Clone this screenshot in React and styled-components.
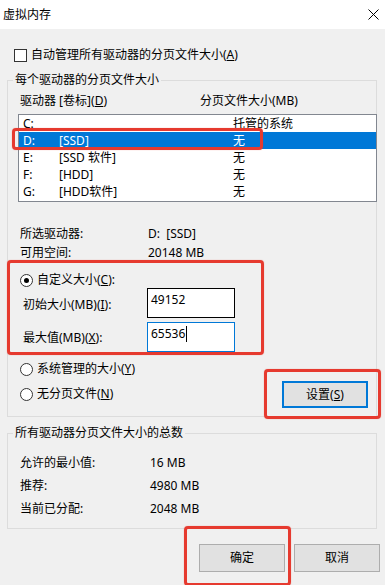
import React from "react";
import styled, { createGlobalStyle } from "styled-components";

const Global = createGlobalStyle`
  html, body { margin: 0; padding: 0; background: #f0f0f0; }
  * { box-sizing: border-box; }
`;

const FONT = `"Segoe UI", "Noto Sans", "Noto Sans CJK SC", sans-serif`;

const Window = styled.div`
  position: relative;
  width: 385px;
  height: 585px;
  overflow: hidden;
  background: #f0f0f0;
  font-family: ${FONT};
  font-size: 12px;
  line-height: 16px;
  color: #000;
  display: flex;
  flex-direction: column;
`;

const TitleBar = styled.div`
  flex: none;
  height: 29px;
  background: #fff;
  display: flex;
  align-items: center;
  justify-content: space-between;
  padding: 0 6px 0 3px;
`;

const Title = styled.span`
  font-size: 12px;
`;

const Body = styled.div`
  display: flex;
  flex-direction: column;
  padding: 18px 8px 0 7px;
`;

const CheckRow = styled.div`
  display: flex;
  align-items: center;
  gap: 4px;
  height: 16px;
  margin-left: 7px;
`;

const CheckBox = styled.span`
  flex: none;
  width: 13px;
  height: 13px;
  border: 1px solid #333;
  background: #fff;
`;

const Group = styled.fieldset`
  margin: ${(p) => p.$mt}px 0 0;
  padding: 0;
  min-width: 0;
  border: 1px solid #dcdcdc;
`;

const Legend = styled.legend`
  margin-left: 5px;
  padding: 0 2px;
  line-height: 16px;
`;

const GroupBody = styled.div`
  padding: ${(p) => p.$pad};
`;

const HeaderRow = styled.div`
  display: grid;
  grid-template-columns: 180px 1fr;
  padding-left: 2px;
  height: 16px;
`;

const ListBox = styled.div`
  margin-top: 5px;
  margin-right: -1px;
  border: 1px solid #828790;
  background: #fff;
  padding-bottom: 1px;
`;

const ListRow = styled.div`
  display: grid;
  grid-template-columns: 36px 174px 1fr;
  height: 17px;
  line-height: 17px;
  padding-left: 4px;
  white-space: nowrap;
  background: ${(p) => (p.$selected ? "#0078d7" : "transparent")};
  color: ${(p) => (p.$selected ? "#fff" : "#000")};
`;

const InfoGrid = styled.div`
  display: grid;
  grid-template-columns: ${(p) => p.$col}px auto;
  grid-auto-rows: ${(p) => p.$row}px;
  row-gap: ${(p) => p.$gap}px;
  align-items: center;
  margin-top: ${(p) => p.$mt}px;
  padding-left: 2px;
  white-space: nowrap;
`;

const CustomSection = styled.div`
  margin-top: 10px;
  display: flex;
  flex-direction: column;
  gap: 0;
`;

const RadioRow = styled.div`
  display: flex;
  align-items: center;
  gap: 4px;
  height: 16px;
  padding-left: 2px;
`;

const Radio = styled.span`
  flex: none;
  width: 13px;
  height: 13px;
  border-radius: 50%;
  border: 1px solid #333;
  background: #fff;
  display: flex;
  align-items: center;
  justify-content: center;
  &::after {
    content: "";
    width: 5px;
    height: 5px;
    border-radius: 50%;
    background: ${(p) => (p.$checked ? "#000" : "transparent")};
  }
`;

const FieldRows = styled.div`
  display: flex;
  flex-direction: column;
  gap: 4px;
`;

const FieldRow = styled.div`
  display: grid;
  grid-template-columns: 124px 88px;
  align-items: start;
  padding-left: 5px;
`;

const FieldLabel = styled.span`
  padding-top: ${(p) => p.$pt}px;
  white-space: nowrap;
`;

const TextBox = styled.div`
  width: 88px;
  height: 30px;
  border: 1px solid ${(p) => (p.$focused ? "#0078d7" : "#000")};
  background: #fff;
  padding: 3px 3px;
  line-height: 16px;
  display: flex;
  align-items: flex-start;
`;

const Caret = styled.span`
  display: inline-block;
  width: 1px;
  height: 16px;
  background: #000;
  margin-left: 1px;
`;

const BottomRow = styled.div`
  margin-top: 9px;
  display: flex;
  justify-content: space-between;
  align-items: flex-start;
`;

const RadioColumn = styled.div`
  display: flex;
  flex-direction: column;
  gap: 9px;
`;

const Button = styled.button`
  width: 86px;
  height: ${(p) => (p.$default ? 27 : 28)}px;
  margin: 0;
  padding: 0;
  font: inherit;
  color: #000;
  background: #e1e1e1;
  border: ${(p) => (p.$default ? "2px solid #0078d7" : "1px solid #adadad")};
  display: flex;
  align-items: center;
  justify-content: center;
`;

const SetButton = styled(Button)`
  margin-top: 20px;
  margin-right: 8px;
`;

const ButtonBar = styled.div`
  margin-top: 15px;
  margin-right: -3px;
  display: flex;
  justify-content: flex-end;
  gap: 9px;
`;

const Annotation = styled.div`
  position: absolute;
  left: ${(p) => p.$x}px;
  top: ${(p) => p.$y}px;
  width: ${(p) => p.$w}px;
  height: ${(p) => p.$h}px;
  border: 3px solid #e63a2f;
  border-radius: 4px;
  box-shadow: 0 0 1px rgba(230, 58, 47, 0.6);
  pointer-events: none;
`;

const CloseIcon = () => (
  <svg width="11" height="11" viewBox="0 0 11 11">
    <path d="M0.5 0.5 L10.5 10.5 M10.5 0.5 L0.5 10.5" stroke="#000" strokeWidth="1" fill="none" />
  </svg>
);

const drives = [
  { d: "C:", label: "", size: "托管的系统" },
  { d: "D:", label: "[SSD]", size: "无", selected: true },
  { d: "E:", label: "[SSD 软件]", size: "无" },
  { d: "F:", label: "[HDD]", size: "无" },
  { d: "G:", label: "[HDD软件]", size: "无" },
];

export default function App() {
  return (
    <Window>
      <Global />
      <TitleBar>
        <Title>虚拟内存</Title>
        <CloseIcon />
      </TitleBar>
      <Body>
        <CheckRow>
          <CheckBox />
          <span>
            自动管理所有驱动器的分页文件大小(<u>A</u>)
          </span>
        </CheckRow>

        <Group $mt={9}>
          <Legend>每个驱动器的分页文件大小</Legend>
          <GroupBody $pad="5px 0 8px 10px">
            <HeaderRow>
              <span>
                驱动器 [卷标](<u>D</u>)
              </span>
              <span>分页文件大小(MB)</span>
            </HeaderRow>
            <ListBox>
              {drives.map((r) => (
                <ListRow key={r.d} $selected={r.selected}>
                  <span>{r.d}</span>
                  <span>{r.label}</span>
                  <span>{r.size}</span>
                </ListRow>
              ))}
            </ListBox>

            <InfoGrid $col={128} $row={19} $gap={0} $mt={22}>
              <span>所选驱动器:</span>
              <span>D:&nbsp;&nbsp;[SSD]</span>
              <span>可用空间:</span>
              <span>20148 MB</span>
            </InfoGrid>

            <CustomSection>
              <RadioRow>
                <Radio $checked />
                <span>
                  自定义大小(<u>C</u>):
                </span>
              </RadioRow>
              <FieldRows>
                <FieldRow>
                  <FieldLabel $pt={9}>
                    初始大小(MB)(<u>I</u>):
                  </FieldLabel>
                  <TextBox>49152</TextBox>
                </FieldRow>
                <FieldRow>
                  <FieldLabel $pt={8}>
                    最大值(MB)(<u>X</u>):
                  </FieldLabel>
                  <TextBox $focused>
                    65536
                    <Caret />
                  </TextBox>
                </FieldRow>
              </FieldRows>
            </CustomSection>

            <BottomRow>
              <RadioColumn>
                <RadioRow>
                  <Radio />
                  <span>
                    系统管理的大小(<u>Y</u>)
                  </span>
                </RadioRow>
                <RadioRow>
                  <Radio />
                  <span>
                    无分页文件(<u>N</u>)
                  </span>
                </RadioRow>
              </RadioColumn>
              <SetButton $default>
                <span>
                  设置(<u>S</u>)
                </span>
              </SetButton>
            </BottomRow>
          </GroupBody>
        </Group>

        <Group $mt={8}>
          <Legend>所有驱动器分页文件大小的总数</Legend>
          <GroupBody $pad="14px 0 11px 10px">
            <InfoGrid $col={130} $row={16} $gap={7} $mt={0}>
              <span>允许的最小值:</span>
              <span>16 MB</span>
              <span>推荐:</span>
              <span>4980 MB</span>
              <span>当前已分配:</span>
              <span>2048 MB</span>
            </InfoGrid>
          </GroupBody>
        </Group>

        <ButtonBar>
          <Button>确定</Button>
          <Button>取消</Button>
        </ButtonBar>
      </Body>

      <Annotation $x={12} $y={128} $w={251} $h={22} />
      <Annotation $x={7} $y={260} $w={257} $h={95} />
      <Annotation $x={264} $y={369} $w={117} $h={50} />
      <Annotation $x={184} $y={526} $w={107} $h={60} />
    </Window>
  );
}
